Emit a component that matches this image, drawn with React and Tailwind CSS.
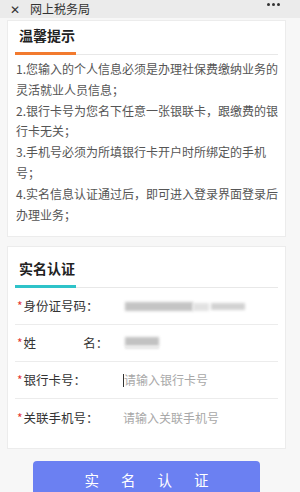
import React from 'react'

const font = { fontFamily: '"Noto Sans CJK SC", "Noto Sans", sans-serif' }

const tips = [
  '1.您输入的个人信息必须是办理社保费缴纳业务的',
  '灵活就业人员信息；',
  '2.银行卡号为您名下任意一张银联卡，跟缴费的银',
  '行卡无关；',
  '3.手机号必须为所填银行卡开户时所绑定的手机',
  '号；',
  '4.实名信息认证通过后，即可进入登录界面登录后',
  '办理业务；',
]

const Label = ({ children }) => (
  <div className="flex items-center w-[106px] shrink-0 text-[12.5px] text-[#333]">
    <span className="text-[#e53935] text-[12px] mr-[1px] leading-none">*</span>
    {children}
  </div>
)

const Row = ({ label, children, last }) => (
  <div className={`flex items-center h-[37px] pl-[2px] ${last ? '' : 'border-b border-[#ececec]'}`}>
    <Label>{label}</Label>
    <div className="flex-1 flex items-center">{children}</div>
  </div>
)

const SectionTitle = ({ title, color }) => (
  <div className="mx-[7px] border-b border-[#e8e8e8]">
    <div className="pl-[4px] text-[14px] leading-[18px] font-bold text-[#222]">{title}</div>
    <div className={`mt-[8px] h-[3px] w-[61px] -mb-[1px] ${color}`} />
  </div>
)

export default function App() {
  return (
    <div className="w-[300px] h-[492px] overflow-hidden bg-[#f7f7f7]" style={font}>
      {/* top bar */}
      <div className="h-[18px] bg-[#ebebeb] flex items-center justify-between pl-[10px] pr-[20px]">
        <div className="flex items-center text-[12px] leading-[18px] text-[#333]">
          <span className="w-[20px]">✕</span>
          <span>网上税务局</span>
        </div>
        <div className="flex gap-[2px] self-start mt-[3px]">
          <span className="w-[3px] h-[3px] rounded-full bg-[#333]" />
          <span className="w-[3px] h-[3px] rounded-full bg-[#333]" />
          <span className="w-[3px] h-[3px] rounded-full bg-[#333]" />
        </div>
      </div>

      {/* tips card */}
      <div className="ml-[7px] w-[279px] mt-[2px] bg-white border border-[#ececec] pt-[5px] pb-[11px]">
        <SectionTitle title="温馨提示" color="bg-[#f27a2e]" />
        <div className="px-[8px] mt-[4px] text-[12px] leading-[20.8px] text-[#555] whitespace-nowrap">
          {tips.map((t) => (
            <div key={t}>{t}</div>
          ))}
        </div>
      </div>

      {/* real name card */}
      <div className="ml-[7px] w-[279px] mt-[9px] bg-white border border-[#ececec] pt-[12px] pb-[12px]">
        <SectionTitle title="实名认证" color="bg-[#2ec3c9]" />
        <div className="mx-[7px]">
          <Row label="身份证号码：">
            <div className="flex items-center ml-[2px] mt-[1px]">
              <div className="w-[68px] h-[9px] bg-[#c4c4c4] blur-[1.5px]" />
              <div className="w-[16px] h-[8px] bg-[#e2e2e2] blur-[1.5px]" />
              <div className="w-[34px] h-[7px] bg-[#d2d2d2] blur-[1.5px] ml-[2px]" />
            </div>
          </Row>
          <Row label={<><span>姓</span><span className="ml-[47px]">名：</span></>}>
            <div className="ml-[2px] flex flex-col">
              <div className="w-[34px] h-[9px] bg-[#c2c2c2] blur-[1.5px]" />
              <div className="w-[34px] h-[3px] bg-[#e6e6e6] blur-[1px]" />
            </div>
          </Row>
          <Row label="银行卡号：">
            <span className="w-[1px] h-[13px] bg-[#333]" />
            <span className="text-[12px] text-[#a8a8a8]">请输入银行卡号</span>
          </Row>
          <Row label="关联手机号：" last>
            <span className="text-[12px] text-[#a8a8a8]">请输入关联手机号</span>
          </Row>
        </div>
      </div>

      {/* button */}
      <div className="ml-[33px] w-[227px] mt-[12px] h-[36px] rounded-[4px] bg-[#6b80f2] flex items-center justify-center gap-[22px] text-white text-[14.5px]">
        <span>实</span>
        <span>名</span>
        <span>认</span>
        <span>证</span>
      </div>
    </div>
  )
}
